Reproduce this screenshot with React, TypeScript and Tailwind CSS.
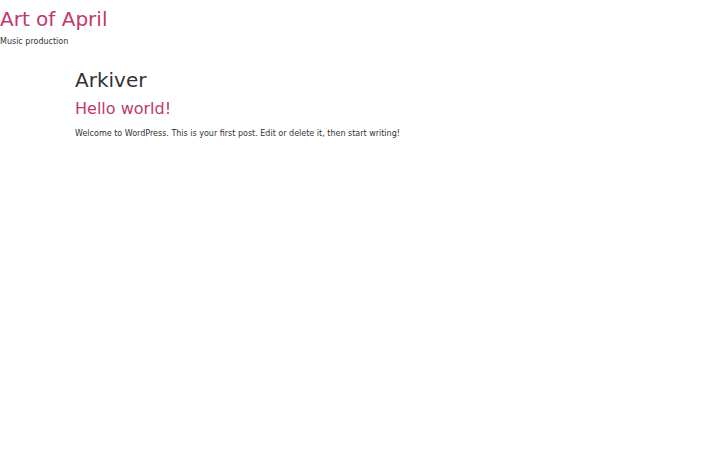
import React from "react";

const App: React.FC = () => {
  return (
    <div className="min-h-screen bg-white text-[#333] font-['DejaVu_Sans',sans-serif]">
      <header>
        <h1 className="text-[20px] leading-[39px] text-[#c0396b]">Art of April</h1>
        <p className="text-[8px] leading-[12px] mt-[-3px]">Music production</p>
      </header>
      <main className="ml-[75px] mt-[17px]">
        <h2 className="text-[20px] leading-[30px] text-[#333]">Arkiver</h2>
        <article>
          <h3 className="text-[16px] leading-[28px] text-[#c0396b] mt-[0px]">Hello world!</h3>
          <p className="text-[8px] leading-[14px] mt-[4px]">
            Welcome to WordPress. This is your first post. Edit or delete it, then start writing!
          </p>
        </article>
      </main>
    </div>
  );
};

export default App;
